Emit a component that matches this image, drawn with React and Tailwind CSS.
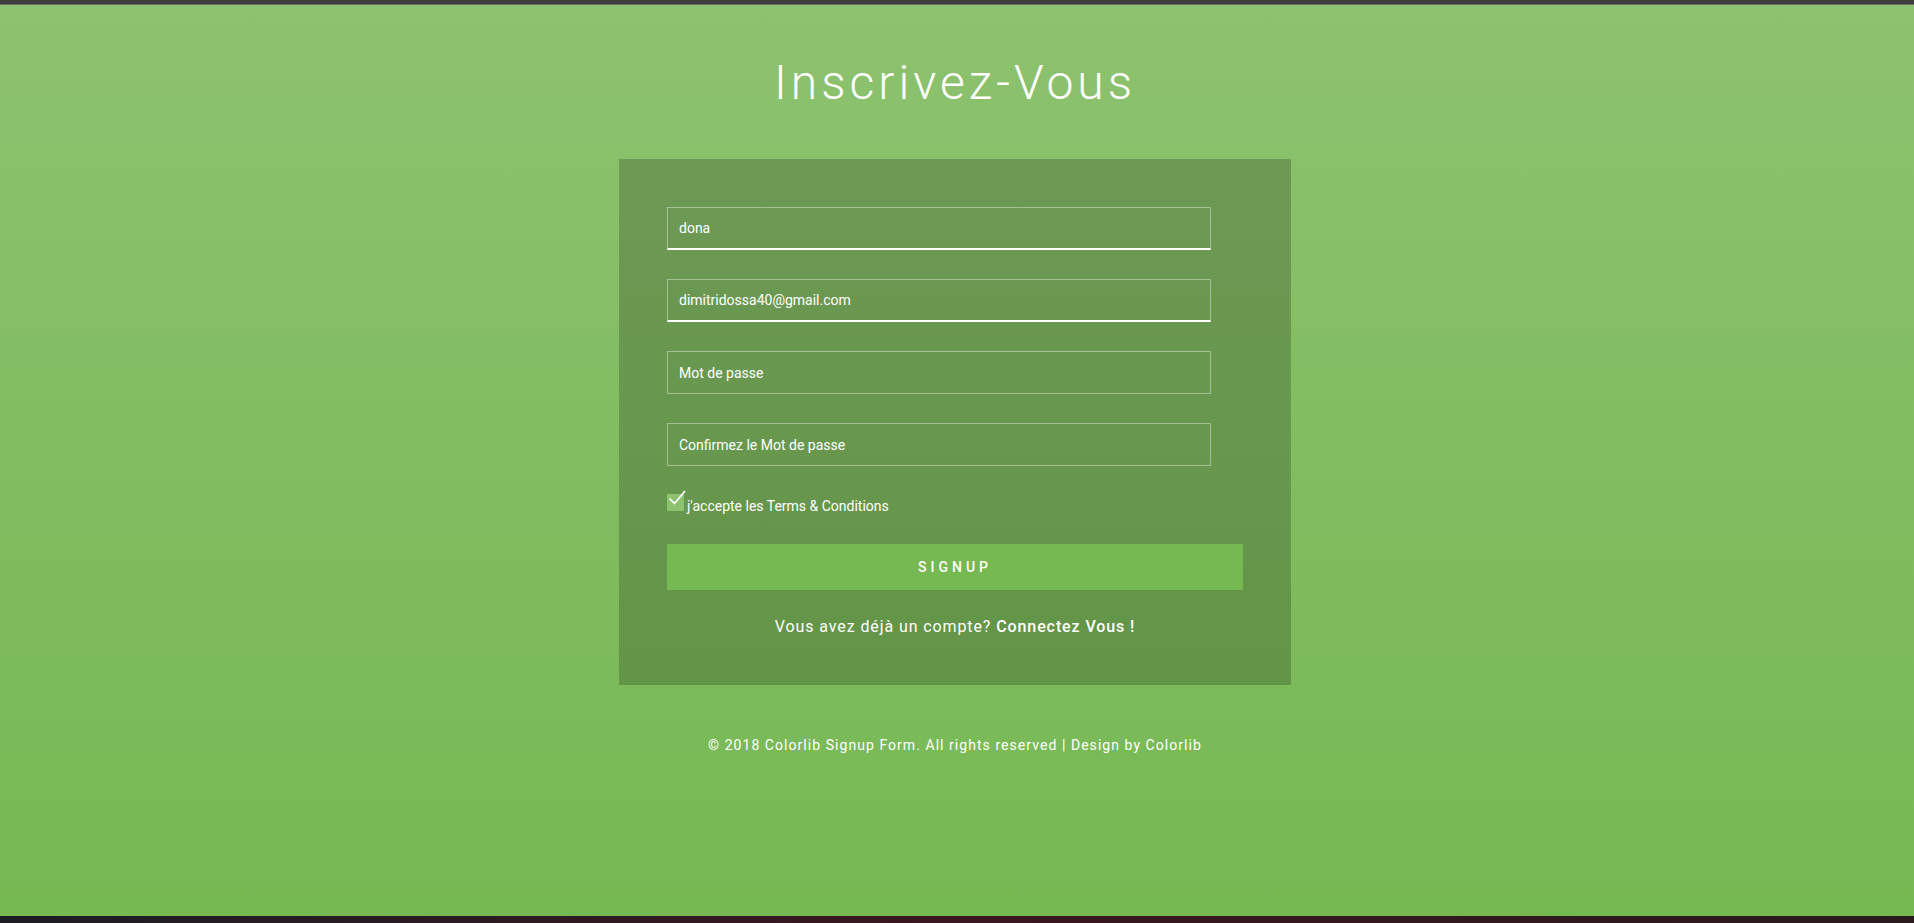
import { useState } from "react";

function CheckBox({ checked, onToggle }) {
  return (
    <button
      type="button"
      onClick={onToggle}
      className="relative w-[17px] h-[17px] bg-[#8dc26f] shrink-0"
    >
      {checked && (
        <svg
          className="absolute left-[1px] top-[-5px]"
          width="18"
          height="18"
          viewBox="0 0 18 18"
          fill="none"
        >
          <path d="M1.5 9.5 L6.5 14.5 L17 2" stroke="#ffffff" strokeWidth="1.6" />
        </svg>
      )}
    </button>
  );
}

function Field({ type = "text", placeholder, value, onChange, filled }) {
  return (
    <input
      type={type}
      placeholder={placeholder}
      value={value}
      onChange={(e) => onChange(e.target.value)}
      className={
        "block w-[544px] h-[43px] bg-transparent border border-white/40 px-[11px] text-[14px] text-white placeholder:text-white outline-none " +
        (filled ? "border-b-2 border-b-white" : "")
      }
    />
  );
}

export default function App() {
  const [name, setName] = useState("dona");
  const [email, setEmail] = useState("dimitridossa40@gmail.com");
  const [password, setPassword] = useState("");
  const [confirm, setConfirm] = useState("");
  const [agree, setAgree] = useState(true);

  return (
    <div className="h-[923px] flex flex-col font-['Roboto','Liberation_Sans',sans-serif] overflow-hidden">
      <div className="h-[4px] bg-[#3c3c3c]" />
      <div className="h-px bg-[#6f6f6f]" />

      <main className="flex-1 flex flex-col items-center pr-[4px] bg-gradient-to-t from-[#76b852] to-[#8dc26f]">
        <h1 className="mt-[50px] text-[48px] leading-[56px] font-light tracking-[4px] text-white">
          Inscrivez-Vous
        </h1>

        <form
          onSubmit={(e) => e.preventDefault()}
          className="mt-[48px] w-[672px] bg-black/20 px-12 pt-12 pb-[46px]"
        >
          <div className="flex flex-col gap-[29px]">
            <Field value={name} onChange={setName} filled />
            <Field value={email} onChange={setEmail} filled />
            <Field
              type="password"
              placeholder="Mot de passe"
              value={password}
              onChange={setPassword}
            />
            <Field
              type="password"
              placeholder="Confirmez le Mot de passe"
              value={confirm}
              onChange={setConfirm}
            />
          </div>

          <label className="mt-[28px] flex items-baseline text-[14px] leading-5 text-white">
            <CheckBox checked={agree} onToggle={() => setAgree(!agree)} />
            <span className="ml-[3px]">j'accepte les Terms &amp; Conditions</span>
          </label>

          <button
            type="submit"
            className="mt-[28px] w-full h-[46px] bg-[#76b852] text-white text-[14px] font-medium tracking-[4px]"
          >
            SIGNUP
          </button>

          <p className="mt-[25px] text-center text-[16px] leading-6 tracking-[0.9px] text-white">
            Vous avez déjà un compte? <span className="font-medium">Connectez Vous !</span>
          </p>
        </form>

        <p className="mt-[50px] text-[14px] leading-5 tracking-[1.05px] text-white">
          © 2018 Colorlib Signup Form. All rights reserved | Design by Colorlib
        </p>
      </main>

      <div className="h-[7px] bg-gradient-to-r from-[#1d1d24] via-[#3a1620] to-[#2a1a1e]" />
    </div>
  );
}
